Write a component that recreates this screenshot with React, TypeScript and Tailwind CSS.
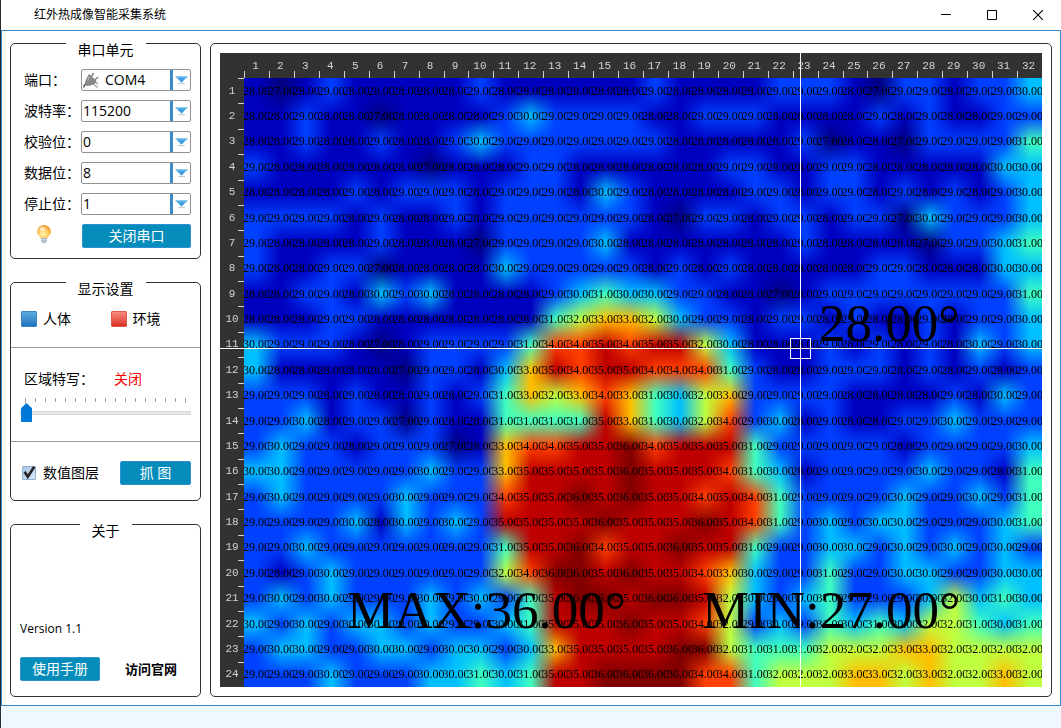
import { useEffect, useRef, useState, type ReactNode } from "react";

const READINGS: string[] = [
  "28 27 28 29 28 28 28 28 28 29 28 28 28 28 28 28 29 28 28 28 28 29 29 29 28 27 29 29 28 29 29 30",
  "28 28 29 28 28 27 28 28 28 28 29 30 29 29 29 29 28 28 29 29 29 28 28 28 28 29 28 29 28 28 29 29",
  "28 28 29 28 28 29 28 28 29 30 29 29 29 29 29 29 29 28 28 28 28 28 29 27 28 28 27 29 29 29 29 31",
  "29 28 28 28 28 28 28 27 28 28 28 29 29 28 28 28 28 28 28 29 29 28 28 29 29 28 28 28 28 28 30 30",
  "28 28 28 28 29 28 29 29 29 28 29 29 29 28 30 29 28 28 28 28 29 29 28 29 29 28 29 28 29 28 29 30",
  "29 29 29 29 28 29 28 28 29 28 29 29 29 29 29 29 28 27 29 29 28 29 29 28 29 29 27 30 29 29 29 30",
  "29 28 28 28 28 29 28 28 28 27 29 29 29 29 30 28 28 28 28 28 28 28 29 28 28 28 28 27 29 29 30 31",
  "29 28 28 29 29 27 28 28 28 28 30 29 29 29 29 29 28 29 28 29 28 28 28 28 28 29 29 28 28 28 30 30",
  "28 28 29 29 28 30 29 30 28 28 28 28 29 30 31 30 30 29 29 28 28 27 28 29 29 29 29 29 29 29 29 31",
  "28 28 28 29 29 28 28 28 28 28 28 28 31 32 33 33 32 30 29 29 28 29 29 28 29 28 28 29 28 29 29 30",
  "30 29 29 29 28 27 28 29 29 29 29 31 34 34 35 34 35 35 32 30 28 28 28 29 28 29 28 29 28 30 29 30",
  "30 28 28 28 28 28 27 29 29 28 30 33 35 34 35 35 34 34 34 31 29 28 28 29 29 29 28 29 28 29 28 29",
  "29 29 29 28 29 28 28 29 28 29 31 33 32 33 34 33 31 30 32 33 29 29 29 29 28 28 28 28 29 28 30 29",
  "29 29 30 28 29 29 27 29 28 28 31 31 31 31 35 33 31 30 32 34 29 30 28 29 28 28 29 29 30 29 29 29",
  "29 30 29 29 28 29 29 29 27 28 33 34 34 35 35 36 34 35 35 35 31 29 29 29 29 29 28 29 29 29 29 30",
  "30 30 29 29 29 29 29 30 29 29 33 35 35 35 35 36 35 35 35 34 31 30 28 29 29 29 29 30 29 29 28 31",
  "29 30 29 29 29 29 30 29 29 29 34 35 35 36 35 36 35 35 34 35 34 31 29 29 29 29 30 29 29 30 29 31",
  "29 29 29 29 30 28 30 29 30 29 35 35 35 35 36 35 35 35 36 35 34 31 29 30 29 30 30 29 29 29 30 31",
  "29 29 30 29 29 29 29 29 29 29 31 35 35 36 34 35 35 36 35 35 31 29 29 30 30 29 30 29 30 29 30 29",
  "29 28 29 30 29 29 29 29 29 29 32 34 36 36 35 36 35 35 34 33 30 29 29 31 29 29 30 30 29 29 30 30",
  "29 30 29 30 29 29 29 30 29 30 29 31 35 36 36 35 36 36 35 32 30 29 30 31 29 29 29 30 32 30 31 30",
  "30 29 30 29 30 30 29 30 29 29 30 31 35 35 35 36 35 35 34 32 29 30 29 31 30 31 30 32 32 31 30 31",
  "29 30 30 29 29 30 30 29 30 30 29 30 33 35 35 35 35 36 36 32 31 31 31 32 32 32 33 33 32 32 32 32",
  "29 29 29 30 29 29 29 30 30 31 30 31 35 35 36 36 36 36 34 34 31 32 32 32 33 33 32 33 32 32 33 32",
];

const GRID = READINGS.map((row) => row.split(" ").map(Number));
const ROWS = GRID.length;
const COLS = GRID[0].length;

const PALETTE: Record<number, [number, number, number]> = {
  27: [0, 0, 128],
  28: [0, 0, 191],
  29: [0, 64, 255],
  30: [0, 191, 255],
  31: [64, 255, 191],
  32: [191, 255, 64],
  33: [255, 191, 0],
  34: [255, 64, 0],
  35: [191, 0, 0],
  36: [128, 0, 0],
};

const CELL = 25;

/** Paints the readings as a colour field, blended linearly between cell centres. */
function HeatCanvas() {
  const ref = useRef<HTMLCanvasElement>(null);

  useEffect(() => {
    const canvas = ref.current;
    const ctx = canvas?.getContext("2d");
    if (!canvas || !ctx) return;
    const { width, height } = canvas;
    const image = ctx.createImageData(width, height);
    const clamp = (v: number, max: number) => Math.min(Math.max(v, 0), max);
    for (let y = 0; y < height; y++) {
      const fy = clamp((y + 0.5) / CELL - 0.5, ROWS - 1);
      const y0 = Math.floor(fy);
      const y1 = Math.min(y0 + 1, ROWS - 1);
      const ty = fy - y0;
      for (let x = 0; x < width; x++) {
        const fx = clamp((x + 0.5) / CELL - 0.5, COLS - 1);
        const x0 = Math.floor(fx);
        const x1 = Math.min(x0 + 1, COLS - 1);
        const tx = fx - x0;
        const a = PALETTE[GRID[y0][x0]];
        const b = PALETTE[GRID[y0][x1]];
        const c = PALETTE[GRID[y1][x0]];
        const d = PALETTE[GRID[y1][x1]];
        const i = (y * width + x) * 4;
        for (let k = 0; k < 3; k++) {
          const top = a[k] + (b[k] - a[k]) * tx;
          const bottom = c[k] + (d[k] - c[k]) * tx;
          image.data[i + k] = top + (bottom - top) * ty;
        }
        image.data[i + 3] = 255;
      }
    }
    ctx.putImageData(image, 0, 0);
  }, []);

  return <canvas ref={ref} width={COLS * CELL} height={ROWS * CELL} className="block h-full w-full" />;
}

function ThermalView({ showValues }: { showValues: boolean }) {
  return (
    <div className="relative flex flex-1 bg-[#323232] font-['Liberation_Serif',serif] text-black">
      <div className="absolute top-[25px] right-0 bottom-0 left-6">
        <HeatCanvas />
      </div>
      <table className="relative grid flex-1 grid-cols-[24px_repeat(32,minmax(0,1fr))] grid-rows-[25px_repeat(24,minmax(0,1fr))]">
        <thead className="contents">
          <tr className="contents">
            <td />
            {GRID[0].map((_, c) => (
              <th
                key={c}
                scope="col"
                className="relative pt-[7px] pr-[2px] text-center font-['Liberation_Mono',monospace] text-[11px] leading-3 font-normal text-[#d2d2d2] before:absolute before:bottom-0 before:left-0 before:h-[7px] before:w-px before:bg-[#d2d2d2]"
              >
                {c + 1}
              </th>
            ))}
          </tr>
        </thead>
        <tbody className="contents">
          {GRID.map((row, r) => (
            <tr key={r} className="contents">
              <th
                scope="row"
                className="relative flex items-center justify-center font-['Liberation_Mono',monospace] text-[11px] leading-3 font-normal text-[#d2d2d2] before:absolute before:top-0 before:right-0 before:h-px before:w-[6px] before:bg-[#d2d2d2]"
              >
                {r + 1}
              </th>
              {row.map((value, c) => (
                <td key={c} className="flex items-center justify-center overflow-hidden text-[12px] leading-4">
                  {showValues && value.toFixed(2)}
                </td>
              ))}
            </tr>
          ))}
        </tbody>
      </table>

      <div className="absolute top-0 bottom-0 left-[580px] w-px bg-white" />
      <div className="absolute top-[295px] right-0 left-0 h-px bg-white" />
      <div className="absolute top-[285px] left-[570px] size-[21px] border border-white" />
      <p className="absolute top-[240px] left-[599px] text-[53px] leading-[60px]">28.00°</p>
      <p className="absolute top-[527px] left-[127px] text-[53px] leading-[60px]">MAX:36.00°</p>
      <p className="absolute top-[527px] left-[482px] text-[53px] leading-[60px]">MIN:27.00°</p>
    </div>
  );
}

function Panel({ title, wide, grow, children }: { title: string; wide?: boolean; grow?: boolean; children: ReactNode }) {
  return (
    <section className={`flex flex-col rounded-[5px] border border-[#333] ${grow ? "flex-1" : ""}`}>
      <h2 className={`mx-auto -mt-px bg-white text-center text-[14px] leading-[14px] ${wide ? "w-20" : "w-[52px]"}`}>{title}</h2>
      {children}
    </section>
  );
}

function PlugIcon() {
  return (
    <svg viewBox="0 0 16 16" className="pointer-events-none absolute top-[3px] left-[2px] size-4">
      <path d="M.8 15.4C.8 13.4 1.6 12.4 3.4 12" fill="none" stroke="#666" strokeWidth="1.6" />
      <path d="M8.6 4.6 10.4.8M12 7.6 15.2 5" stroke="#888" strokeWidth="1.6" />
      <path d="M6.2 2.6 13.2 9.4 11.6 11.4 8 12.8 4 13.6 2.2 11.8 3.4 7.8Z" fill="#8a8a8a" stroke="#6a6a6a" strokeWidth=".8" />
      <path d="M6.4 4.6 4.6 8.4" stroke="#c4c4c4" strokeWidth="1" />
      <path d="M10.6 12.2 14.6 15.4M13 10.6l2 1.6" stroke="#a4a4a4" strokeWidth="1.3" />
    </svg>
  );
}

function Field({ id, label, options, icon }: { id: string; label: string; options: string[]; icon?: ReactNode }) {
  return (
    <div className="flex h-[22px] items-center">
      <label htmlFor={id} className="w-[57px] shrink-0 whitespace-nowrap">
        {label}
      </label>
      <div className="relative h-full flex-1">
        <select
          id={id}
          className={`h-full w-full appearance-none rounded-[2px] border border-[#929292] bg-white pr-5 text-[14px] leading-5 outline-none ${icon ? "pl-[23px]" : "pl-px"}`}
        >
          {options.map((o) => (
            <option key={o}>{o}</option>
          ))}
        </select>
        {icon}
        <span className="pointer-events-none absolute top-px right-px bottom-px flex w-5 items-center justify-center border-l-[3px] border-[#3b8bcb]">
          <svg viewBox="0 0 13 9" className="h-[9px] w-[13px]">
            <path d="M.5.5h12L6.5 6.8z" fill="#3f9fe0" />
            <path d="M.5 1h12" stroke="#7cc4f0" strokeWidth="1.2" />
            <path d="M3 7.6h7" stroke="#c4cdd4" strokeWidth="1.2" />
          </svg>
        </span>
      </div>
    </div>
  );
}

function ActionButton({ className, children }: { className: string; children: ReactNode }) {
  return (
    <button
      type="button"
      className={`h-6 rounded-[2px] border border-[#2f8fd0] bg-[#048cbb] text-[14px] leading-5 whitespace-pre text-white ${className}`}
    >
      {children}
    </button>
  );
}

function BulbIcon() {
  return (
    <svg viewBox="0 0 16 20" className="h-5 w-4">
      <defs>
        <radialGradient id="bulb" cx=".45" cy=".65" r=".65">
          <stop offset="0" stopColor="#fff3b8" />
          <stop offset=".5" stopColor="#ffcf66" />
          <stop offset="1" stopColor="#f2922a" />
        </radialGradient>
      </defs>
      <path d="M8 1a7 7 0 0 0-7 7c0 3.2 3.2 4 4 6.6h6c.8-2.6 4-3.4 4-6.6A7 7 0 0 0 8 1z" fill="url(#bulb)" />
      <ellipse cx="6.4" cy="4.8" rx="2.8" ry="2" fill="#fff" opacity=".55" />
      <path d="M5 14h6v3.2L9.4 19H6.6L5 17.2z" fill="#9fb4c8" />
      <path d="M5 15.6h6M5.2 17.2h5.6" stroke="#dfe8f0" strokeWidth=".7" />
    </svg>
  );
}

function LegendItem({ swatch, label }: { swatch: string; label: string }) {
  return (
    <div className="flex w-[90px] items-center gap-[6px]">
      <span className={`size-4 rounded-[1px] border bg-linear-to-b ${swatch}`} />
      {label}
    </div>
  );
}

function ZoomSlider() {
  const [level, setLevel] = useState(0);
  return (
    <div className="mx-[9px] mt-[9px]">
      <svg viewBox="0 0 171 5" className="block h-[5px] w-full" aria-hidden="true">
        {Array.from({ length: 17 }, (_, i) => (
          <path key={i} d={`M${i * 10 + 5.5} 0v${i === 0 || i === 16 ? 5 : 4}`} stroke="#a0a0a0" strokeWidth="1" />
        ))}
      </svg>
      <input
        id="zoom"
        type="range"
        min={0}
        max={16}
        value={level}
        onChange={(e) => setLevel(Number(e.target.value))}
        className="block h-5 w-full appearance-none bg-transparent outline-none [&::-webkit-slider-runnable-track]:h-1 [&::-webkit-slider-runnable-track]:border [&::-webkit-slider-runnable-track]:border-[#d6d6d6] [&::-webkit-slider-runnable-track]:bg-[#e7eaea] [&::-webkit-slider-thumb]:-mt-[9px] [&::-webkit-slider-thumb]:h-[19px] [&::-webkit-slider-thumb]:w-[11px] [&::-webkit-slider-thumb]:appearance-none [&::-webkit-slider-thumb]:bg-[#0078d7] [&::-webkit-slider-thumb]:[clip-path:polygon(50%_0,100%_28%,100%_100%,0_100%,0_28%)]"
      />
    </div>
  );
}

export default function App() {
  const [showValues, setShowValues] = useState(true);

  return (
    <div className="flex min-h-screen flex-col border-l border-[#2b2b2b] bg-white font-['Open_Sans','Noto_Sans_CJK_SC',sans-serif] text-[14px] leading-5 text-black">
      <header className="flex h-[30px] items-center bg-white">
        <h1 className="flex-1 pl-[33px] text-[12px] leading-4">红外热成像智能采集系统</h1>
        <button type="button" aria-label="最小化" className="flex h-full w-[46px] items-center justify-center">
          <svg viewBox="0 0 10 10" className="size-[10px]">
            <path d="M0 4.5h10" stroke="#000" />
          </svg>
        </button>
        <button type="button" aria-label="最大化" className="flex h-full w-[46px] items-center justify-center">
          <svg viewBox="0 0 10 10" className="size-[10px]">
            <path d="M.5.5h9v9h-9z" fill="none" stroke="#000" />
          </svg>
        </button>
        <button type="button" aria-label="关闭" className="flex h-full w-[46px] items-center justify-center">
          <svg viewBox="0 0 10 10" className="size-[10px]">
            <path d="M0 0l10 10M10 0 0 10" stroke="#000" strokeWidth="1.1" />
          </svg>
        </button>
      </header>

      <main className="flex flex-1 gap-[9px] border border-[#3b87c8] px-2 pt-3 pb-2">
        <aside className="flex w-[191px] shrink-0 flex-col gap-[23px]">
          <Panel title="串口单元" wide>
            <div className="flex flex-col gap-[9px] pt-3 pr-[9px] pb-[10px] pl-[13px]">
              <Field id="port" label="端口：" options={["COM4"]} icon={<PlugIcon />} />
              <Field id="baud" label="波特率：" options={["115200"]} />
              <Field id="parity" label="校验位：" options={["0"]} />
              <Field id="data" label="数据位：" options={["8"]} />
              <Field id="stop" label="停止位：" options={["1"]} />
              <div className="flex justify-between pl-3">
                <BulbIcon />
                <ActionButton className="w-[109px]">关闭串口</ActionButton>
              </div>
            </div>
          </Panel>

          <Panel title="显示设置" wide>
            <div className="flex border-b border-[#999] pt-[13px] pb-[18px] pl-[10px]">
              <LegendItem swatch="border-[#3b83c0] from-[#5cabe0] to-[#1f74bd]" label="人体" />
              <LegendItem swatch="border-[#dd5a4c] from-[#f58a7c] to-[#da2a22]" label="环境" />
            </div>
            <div className="border-b border-[#999] pt-[21px] pb-[18px]">
              <div className="flex pl-[13px]">
                <label htmlFor="zoom" className="w-[90px]">
                  区域特写：
                </label>
                <output htmlFor="zoom" className="text-[#ff0000]">
                  关闭
                </output>
              </div>
              <ZoomSlider />
            </div>
            <div className="flex items-center justify-between pt-[19px] pr-[9px] pb-[15px] pl-[11px]">
              <label className="flex items-center gap-[6px]">
                <span className="relative size-[15px]">
                  <input
                    type="checkbox"
                    checked={showValues}
                    onChange={(e) => setShowValues(e.target.checked)}
                    className="peer block size-[14px] appearance-none rounded-[1px] border border-[#8fb2d0] bg-linear-to-br from-[#a9c6e0] to-[#d6eafa]"
                  />
                  <svg viewBox="0 0 14 14" className="pointer-events-none absolute top-0 left-0 hidden size-[14px] overflow-visible peer-checked:block">
                    <path d="M2.6 5.8 5.8 10.8 12.2.8" fill="none" stroke="#262626" strokeWidth="2.6" />
                  </svg>
                </span>
                数值图层
              </label>
              <ActionButton className="w-[71px]">抓 图</ActionButton>
            </div>
          </Panel>

          <Panel title="关于" grow>
            <div className="flex flex-1 flex-col justify-end gap-[18px] pr-[9px] pb-[15px] pl-[9px]">
              <p className="text-[12px] leading-5">Version 1.1</p>
              <div className="flex items-center gap-[25px]">
                <ActionButton className="w-20">使用手册</ActionButton>
                <a href="#site" className="text-[13px] font-bold">
                  访问官网
                </a>
              </div>
            </div>
          </Panel>
        </aside>

        <section className="flex min-w-0 flex-1 rounded-[5px] border border-[#333] p-[9px]">
          <ThermalView showValues={showValues} />
        </section>
      </main>
      <footer className="h-[22px] bg-[#eff7ff]" />
    </div>
  );
}
